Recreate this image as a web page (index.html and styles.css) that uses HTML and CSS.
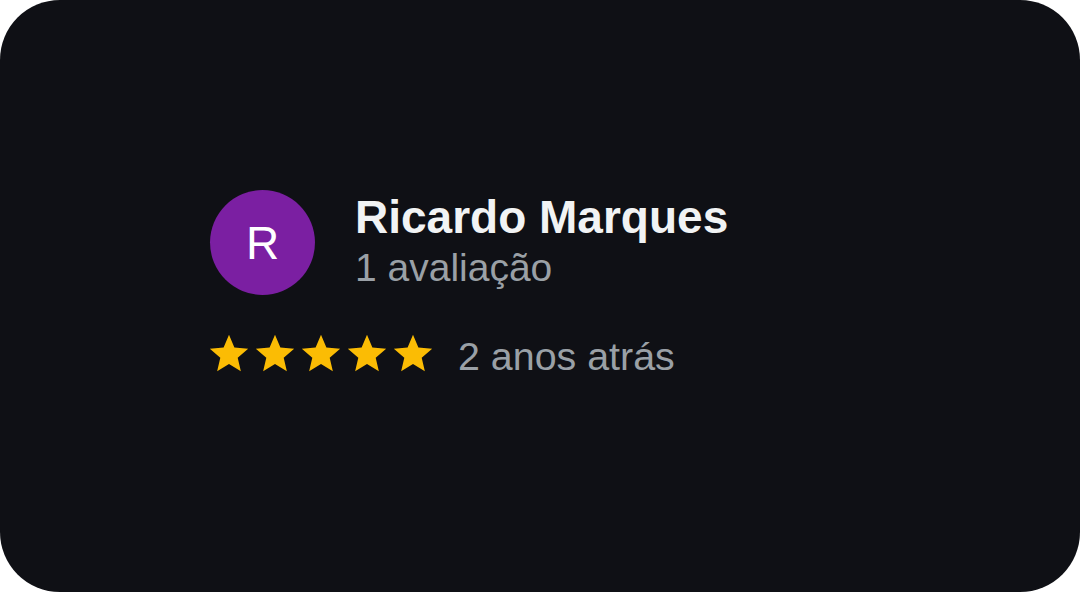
FILE: index.html
```html
<!DOCTYPE html>
<html lang="pt">
<head>
    <meta charset="UTF-8">
    <meta name="viewport" content="width=device-width, initial-scale=1.0">
    <title>Avaliação</title>
    <link rel="stylesheet" href="styles.css">
</head>
<body>
    <div class="card">
        <div class="review-head">
            <div class="avatar">R</div>
            <div class="author">
                <div class="author-name">Ricardo Marques</div>
                <div class="author-count">1 avaliação</div>
            </div>
        </div>
        <div class="review-meta">
            <div class="stars">
                <svg class="star" viewBox="0 0 24 24"><path d="M12 17.27L18.18 21l-1.64-7.03L22 9.24l-7.19-.61L12 2 9.19 8.63 2 9.24l5.46 4.73L5.82 21z"/></svg>
                <svg class="star" viewBox="0 0 24 24"><path d="M12 17.27L18.18 21l-1.64-7.03L22 9.24l-7.19-.61L12 2 9.19 8.63 2 9.24l5.46 4.73L5.82 21z"/></svg>
                <svg class="star" viewBox="0 0 24 24"><path d="M12 17.27L18.18 21l-1.64-7.03L22 9.24l-7.19-.61L12 2 9.19 8.63 2 9.24l5.46 4.73L5.82 21z"/></svg>
                <svg class="star" viewBox="0 0 24 24"><path d="M12 17.27L18.18 21l-1.64-7.03L22 9.24l-7.19-.61L12 2 9.19 8.63 2 9.24l5.46 4.73L5.82 21z"/></svg>
                <svg class="star" viewBox="0 0 24 24"><path d="M12 17.27L18.18 21l-1.64-7.03L22 9.24l-7.19-.61L12 2 9.19 8.63 2 9.24l5.46 4.73L5.82 21z"/></svg>
            </div>
            <span class="review-date">2 anos atrás</span>
        </div>
    </div>
</body>
</html>
```

FILE: styles.css
```css
body {
    margin: 0;
    background: #ffffff;
    font-family: "Liberation Sans", Arial, sans-serif;
}
.card {
    box-sizing: border-box;
    width: 1080px;
    height: 592px;
    border-radius: 60px;
    background: #0f1015;
    padding: 190px 0 0 210px;
}
.review-head {
    display: flex;
    align-items: flex-start;
    gap: 40px;
}
.avatar {
    width: 105px;
    height: 105px;
    border-radius: 50%;
    background: #7b1fa2;
    color: #fff;
    font-size: 46px;
    display: flex;
    align-items: center;
    justify-content: center;
}
.author {
    padding-top: 1px;
}
.author-name {
    color: #f1f3f4;
    font-size: 46px;
    font-weight: bold;
    line-height: 52px;
}
.author-count {
    color: #9aa0a6;
    font-size: 39px;
    line-height: 44px;
    margin-top: 3px;
}
.review-meta {
    display: flex;
    align-items: flex-start;
    gap: 22px;
    margin-top: 36px;
    margin-left: -4px;
}
.stars {
    display: flex;
}
.star {
    width: 46px;
    height: 46px;
    fill: #fbbc04;
}
.review-date {
    color: #9aa0a6;
    font-size: 39.4px;
    line-height: 44px;
    margin-top: 3px;
}
```
